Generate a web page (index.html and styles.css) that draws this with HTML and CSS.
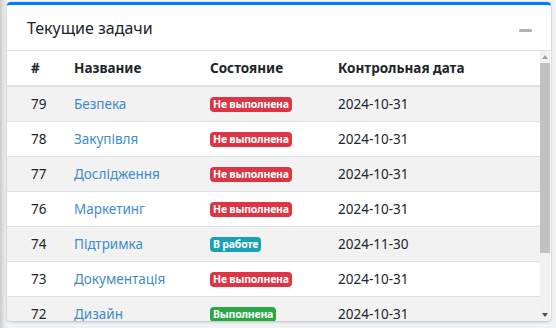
FILE: index.html
```html
<!DOCTYPE html>
<html lang="ru">
<head>
<meta charset="utf-8">
<link rel="stylesheet" href="styles.css">
</head>
<body>
<div class="card">
  <div class="card-header">
    <h3 class="card-title">Текущие задачи</h3>
    <span class="collapse-btn"></span>
  </div>
  <div class="card-body">
    <div class="scroll-area">
      <table class="tasks">
        <thead>
          <tr><th class="c-id">#</th><th class="c-name">Название</th><th class="c-state">Состояние</th><th class="c-date">Контрольная дата</th></tr>
        </thead>
        <tbody>
          <tr><td>79</td><td><a href="#">Безпека</a></td><td><span class="badge red">Не выполнена</span></td><td>2024-10-31</td></tr>
          <tr><td>78</td><td><a href="#">Закупівля</a></td><td><span class="badge red">Не выполнена</span></td><td>2024-10-31</td></tr>
          <tr><td>77</td><td><a href="#">Дослідження</a></td><td><span class="badge red">Не выполнена</span></td><td>2024-10-31</td></tr>
          <tr><td>76</td><td><a href="#">Маркетинг</a></td><td><span class="badge red">Не выполнена</span></td><td>2024-10-31</td></tr>
          <tr><td>74</td><td><a href="#">Підтримка</a></td><td><span class="badge teal">В работе</span></td><td>2024-11-30</td></tr>
          <tr><td>73</td><td><a href="#">Документація</a></td><td><span class="badge red">Не выполнена</span></td><td>2024-10-31</td></tr>
          <tr><td>72</td><td><a href="#">Дизайн</a></td><td><span class="badge green">Выполнена</span></td><td>2024-10-31</td></tr>
        </tbody>
      </table>
    </div>
    <div class="scrollbar">
      <span class="sb-btn"><svg width="6" height="4" viewBox="0 0 6 4"><polygon points="0,4 6,4 3,0" fill="#a3a3a3"/></svg></span>
      <span class="sb-thumb"></span>
      <span class="sb-space"></span>
      <span class="sb-btn"><svg width="6" height="4" viewBox="0 0 6 4"><polygon points="0,0 6,0 3,4" fill="#505050"/></svg></span>
    </div>
  </div>
</div>
</body>
</html>
```
FILE: styles.css
```css
html, body {
  margin: 0;
  padding: 0;
}
body {
  background: linear-gradient(to right, #c9cacc 0, #e6e7e9 4px, #f1f2f4 7px, #f1f2f4 100%);
  font-family: "Noto Sans", "Open Sans", sans-serif;
  color: #212529;
  height: 328px;
  overflow: hidden;
  padding: 2px 5px 0 7px;
  box-sizing: border-box;
}
.card {
  width: 544px;
  height: 319px;
  background: #fff;
  border-top: 3px solid #007bff;
  border-radius: 4px;
  box-shadow: 0 0 1px rgba(0,0,0,.2), 0 1px 3px rgba(0,0,0,.2);
  display: flex;
  flex-direction: column;
  overflow: hidden;
  box-sizing: border-box;
}
.card-header {
  height: 46px;
  flex: none;
  box-sizing: border-box;
  border-bottom: 1px solid #dee2e6;
  display: flex;
  align-items: center;
  justify-content: space-between;
  padding: 0 19px 0 20px;
}
.card-title {
  margin: 0;
  font-size: 16px;
  font-weight: 400;
  line-height: 1;
  padding-top: 1px;
}
.collapse-btn {
  width: 13px;
  height: 3px;
  background: #adb5bd;
  border-radius: 1px;
  margin-top: 5px;
}
.card-body {
  flex: 1;
  display: flex;
  min-height: 0;
}
.scroll-area {
  flex: 1;
  overflow: hidden;
}
.scrollbar {
  width: 10px;
  flex: none;
  background: #f1f1f1;
  display: flex;
  flex-direction: column;
  margin-right: 1px;
}
.sb-btn {
  height: 12px;
  flex: none;
  display: flex;
  align-items: center;
  justify-content: center;
}
.sb-thumb {
  height: 190px;
  flex: none;
  background: #c1c1c1;
}
.sb-space {
  flex: 1;
}
.tasks {
  width: 100%;
  border-collapse: collapse;
  font-size: 13.5px;
}
.tasks th, .tasks td {
  text-align: left;
  padding: 0 12px;
  height: 34px;
  line-height: 20px;
  vertical-align: middle;
  white-space: nowrap;
}
.tasks th {
  font-weight: 700;
  border-bottom: 2px solid #dee2e6;
  height: 34px;
}
.tasks th:first-child, .tasks td:first-child {
  padding-left: 24px;
}
.c-id { width: 19px; }
.c-name { width: 112px; }
.c-state { width: 104px; }
.tasks tbody td {
  border-top: 1px solid #dee2e6;
}
.tasks tbody tr:first-child td {
  border-top: none;
}
.tasks tbody tr:nth-child(odd) {
  background: #f2f2f2;
}
.tasks a {
  color: #3f8ccb;
  text-decoration: none;
}
.badge {
  display: inline-block;
  font-size: 10.5px;
  font-weight: 700;
  letter-spacing: -0.2px;
  color: #fff;
  padding: 1px 3px 2px;
  line-height: 12px;
  border-radius: 4px;
  vertical-align: 1px;
}
.red { background: #dc3545; }
.teal { background: #17a2b8; }
.green { background: #28a745; }
```
